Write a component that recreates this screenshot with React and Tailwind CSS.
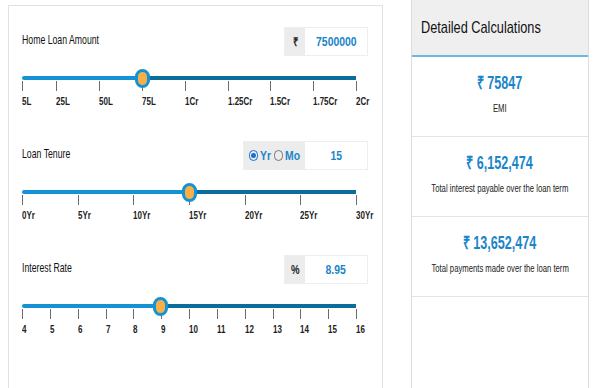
import React from 'react';

const font = { fontFamily: '"Liberation Sans", Arial, sans-serif' };

// the reference text is condensed, so squeeze it horizontally
function N({ children, scale = 'scale-x-[0.8]', origin = 'origin-left' }) {
  return <span className={`inline-block whitespace-nowrap ${scale} ${origin}`}>{children}</span>;
}

const sliders = [
  {
    label: 'Home Loan Amount',
    value: 7500000,
    min: 500000,
    max: 20000000,
    prefix: '₹',
    display: '7500000',
    ticks: [
      ['5L', 500000], ['25L', 2500000], ['50L', 5000000], ['75L', 7500000], ['1Cr', 10000000],
      ['1.25Cr', 12500000], ['1.5Cr', 15000000], ['1.75Cr', 17500000], ['2Cr', 20000000],
    ],
  },
  {
    label: 'Loan Tenure',
    value: 15,
    min: 0,
    max: 30,
    radio: true,
    display: '15',
    ticks: [['0Yr', 0], ['5Yr', 5], ['10Yr', 10], ['15Yr', 15], ['20Yr', 20], ['25Yr', 25], ['30Yr', 30]],
  },
  {
    label: 'Interest Rate',
    value: 8.95,
    min: 4,
    max: 16,
    prefix: '%',
    display: '8.95',
    ticks: [4, 5, 6, 7, 8, 9, 10, 11, 12, 13, 14, 15, 16].map((n) => [String(n), n]),
  },
];

const TRACK = 334;

function Slider({ s }) {
  const pos = (v) => ((v - s.min) / (s.max - s.min)) * TRACK;
  const thumb = pos(s.value);
  return (
    <div className="relative h-[85px] w-[334px]">
      <div className="absolute top-[20px] left-0 h-[4px] rounded-l bg-[#1592d3]" style={{ width: thumb }} />
      <div className="absolute top-[20px] right-0 h-[4px] bg-[#0b6d9a]" style={{ left: thumb }} />
      {s.ticks.map(([t, v]) => (
        <React.Fragment key={t}>
          <div className="absolute top-[25px] h-[10px] w-px bg-[#6b6b6b]" style={{ left: pos(v) }} />
          <div className="absolute top-[40px] text-[10px] leading-[11px] font-bold text-[#222]" style={{ left: pos(v) }}>
            <N>{t}</N>
          </div>
        </React.Fragment>
      ))}
      <div
        className="absolute top-[13px] h-[19px] w-[15px] rounded-full border-[3px] border-[#1592d3] bg-[#f7b049]"
        style={{ left: thumb - 7 }}
      />
    </div>
  );
}

function Section({ s }) {
  return (
    <div className="h-[114px]">
      <div className="flex h-[29px] items-center justify-between w-[346px]">
        <span className="-mt-[3px] text-[13px] text-[#111]">
          <N scale="scale-x-[0.67]">{s.label}</N>
        </span>
        <div className="flex h-[29px] border border-[#eee]">
          {s.radio ? (
            <div className="flex w-[61px] items-center gap-[1px] bg-[#ececec] pl-[5px] text-[13px] font-bold text-[#1a86c8]">
              <span className="flex h-[11px] w-[9px] shrink-0 items-center justify-center rounded-full border border-[#1a6fd0]">
                <span className="h-[5px] w-[5px] rounded-full bg-[#1a6fd0]" />
              </span>
              <span className="w-[14px] pl-[1px]"><N>Yr</N></span>
              <span className="h-[11px] w-[9px] shrink-0 rounded-full border border-[#777]" />
              <span className="pl-[1px]"><N>Mo</N></span>
            </div>
          ) : (
            <div className="flex w-[20px] items-center justify-center bg-[#ececec] text-[12px] font-bold text-[#222]">
              <N origin="origin-center">{s.prefix}</N>
            </div>
          )}
          <div className="flex w-[62px] items-center justify-center bg-white text-[13px] font-bold text-[#1a86c8]">
            <N origin="origin-center">{s.display}</N>
          </div>
        </div>
      </div>
      <Slider s={s} />
    </div>
  );
}

const results = [
  ['₹ 75847', 'EMI'],
  ['₹ 6,152,474', 'Total interest payable over the loan term'],
  ['₹ 13,652,474', 'Total payments made over the loan term'],
];

export default function App() {
  return (
    <div className="flex h-[388px] w-[600px] overflow-hidden bg-white" style={font}>
      <div className="ml-[8px] mt-[5px] h-[420px] w-[375px] border border-[#e2e2e2] pl-[13px] pt-[21px]">
        {sliders.map((s) => (
          <Section key={s.label} s={s} />
        ))}
      </div>
      <div className="ml-[28px] h-[420px] w-[178px] border-x border-[#dcdcdc]">
        <div className="flex h-[57px] items-center border-b-2 border-[#6db7e4] bg-[#efefef] pl-[9px] text-[17px] text-[#111]">
          <N scale="scale-x-[0.75]">Detailed Calculations</N>
        </div>
        {results.map(([v, d]) => (
          <div key={d} className="flex h-[80px] flex-col items-center border-b border-[#e5e5e5] pt-[16px]">
            <div className="text-[18px] leading-[20px] font-bold text-[#1a86c8]">
              <N scale="scale-x-[0.7]" origin="origin-center">{v}</N>
            </div>
            <div className="mt-[10px] text-[11px] leading-[11px] text-[#222]">
              <N scale="scale-x-[0.7]" origin="origin-center">{d}</N>
            </div>
          </div>
        ))}
      </div>
    </div>
  );
}
